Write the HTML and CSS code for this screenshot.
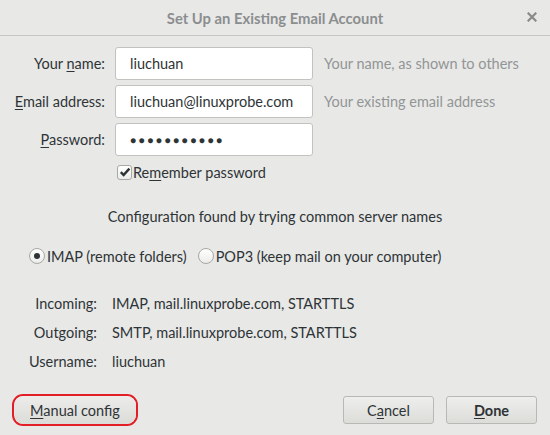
FILE: index.html
```html
<!DOCTYPE html>
<html>
<head>
<meta charset="utf-8">
<link rel="stylesheet" href="styles.css">
</head>
<body>
<div class="dialog">
  <div class="titlebar">
    <div class="title">Set Up an Existing Email Account</div>
    <div class="close">
      <svg width="10" height="10" viewBox="0 0 10 10"><path d="M1.5 1.5 L8.5 8.5 M8.5 1.5 L1.5 8.5" stroke="#8a8a8a" stroke-width="2.2" stroke-linecap="square"/></svg>
    </div>
  </div>
  <div class="content">
    <div class="form">
      <label class="lbl">Your <u>n</u>ame:</label>
      <div class="input">liuchuan</div>
      <div class="hint">Your name, as shown to others</div>

      <label class="lbl"><u>E</u>mail address:</label>
      <div class="input">liuchuan@linuxprobe.com</div>
      <div class="hint">Your existing email address</div>

      <label class="lbl"><u>P</u>assword:</label>
      <div class="input pw">●●●●●●●●●●●</div>
      <div class="hint"></div>
    </div>
    <div class="remember">
      <span class="checkbox">
        <svg width="12" height="12" viewBox="0 0 12 12"><path d="M1.8 6.2 L4.6 9 L10.4 2.6" fill="none" stroke="#2e3436" stroke-width="2.4"/></svg>
      </span>
      <span>Re<u>m</u>ember password</span>
    </div>
    <div class="found">Configuration found by trying common server names</div>
    <div class="protocols">
      <span class="radio checked"><span class="dot"></span></span>
      <span class="ptext">IMAP (remote folders)</span>
      <span class="radio"></span>
      <span class="ptext">POP3 (keep mail on your computer)</span>
    </div>
    <div class="servers">
      <div class="slbl">Incoming:</div><div class="sval">IMAP, mail.linuxprobe.com, STARTTLS</div>
      <div class="slbl">Outgoing:</div><div class="sval">SMTP, mail.linuxprobe.com, STARTTLS</div>
      <div class="slbl">Username:</div><div class="sval">liuchuan</div>
    </div>
    <div class="buttons">
      <div class="annot"><div class="btn manual"><span><u>M</u>anual config</span></div></div>
      <div class="spacer"></div>
      <div class="btn"><span>C<u>a</u>ncel</span></div>
      <div class="btn done"><span><u>D</u>one</span></div>
    </div>
  </div>
</div>
</body>
</html>
```

FILE: styles.css
```css
html, body {
  margin: 0;
  padding: 0;
}
body {
  width: 550px;
  height: 435px;
  background: #e8e8e7;
  font-family: Lato, "Noto Sans", sans-serif;
  font-size: 14.5px;
  color: #2e3436;
  overflow: hidden;
}
u {
  text-decoration: underline;
  text-underline-offset: 2px;
}
.dialog {
  width: 550px;
  height: 435px;
  display: flex;
  flex-direction: column;
}
.titlebar {
  height: 35px;
  border-bottom: 1px solid #c6c6c4;
  display: flex;
  align-items: center;
  justify-content: center;
  position: relative;
  flex-shrink: 0;
}
.title {
  color: #8b8e8f;
  font-weight: bold;
  font-size: 14.8px;
}
.close {
  position: absolute;
  right: 13px;
  top: 12px;
  width: 10px;
  height: 10px;
  display: flex;
}
.content {
  display: flex;
  flex-direction: column;
  padding-top: 11px;
}
.form {
  display: grid;
  grid-template-columns: 105px 198px auto;
  column-gap: 10px;
  row-gap: 5px;
  align-items: center;
}
.form .lbl {
  text-align: right;
  color: #2e3436;
}
.form .input {
  height: 31px;
  border: 1px solid #c2c3bf;
  border-radius: 3px;
  background: #ffffff;
  box-sizing: content-box;
  display: flex;
  align-items: center;
  padding-left: 14px;
  color: #2e3436;
}
.form .input.pw {
  font-size: 10px;
  letter-spacing: 2.6px;
  padding-left: 14px;
}
.form .hint {
  color: #929595;
  padding-left: 1px;
}
.remember {
  display: flex;
  align-items: center;
  margin-top: 5px;
  padding-left: 117px;
  height: 22px;
}
.checkbox {
  border: 1px solid #a7a9a5;
  border-radius: 3px;
  background: linear-gradient(#ffffff, #ececea);
  display: flex;
  align-items: center;
  justify-content: center;
  margin-right: 1px;
  box-sizing: border-box;
  width: 15px;
  height: 15px;
}
.found {
  margin-top: 24px;
  text-align: center;
  height: 20px;
  line-height: 20px;
}
.protocols {
  display: flex;
  align-items: center;
  margin-top: 19px;
  padding-left: 29px;
  height: 20px;
}
.radio {
  width: 16px;
  height: 16px;
  border: 1px solid #a7a9a5;
  border-radius: 50%;
  background: linear-gradient(#ffffff, #ececea);
  box-sizing: border-box;
  display: flex;
  align-items: center;
  justify-content: center;
  margin-right: 2px;
}
.radio .dot {
  width: 6px;
  height: 6px;
  border-radius: 50%;
  background: #2e3436;
}
.ptext {
  margin-right: 11px;
}
.servers {
  display: grid;
  grid-template-columns: 97px auto;
  column-gap: 15px;
  row-gap: 9px;
  margin-top: 28px;
  line-height: 20px;
}
.slbl {
  text-align: right;
}
.buttons {
  display: flex;
  align-items: center;
  margin-top: 22px;
  padding: 0 13px 0 12px;
  gap: 12px;
}
.spacer {
  flex: 1;
}
.btn {
  width: 91px;
  height: 28px;
  box-sizing: border-box;
  border: 1px solid #b8b9b5;
  border-radius: 3px;
  background: linear-gradient(#eeeeec, #dcdcd9);
  display: flex;
  align-items: center;
  justify-content: center;
  color: #2e3436;
}
.btn.done {
  font-weight: bold;
}
.annot {
  border: 2.5px solid #e41e26;
  border-radius: 11px;
  width: 126px;
  height: 32px;
  box-sizing: border-box;
  display: flex;
  align-items: center;
  justify-content: center;
  overflow: hidden;
}
.btn.manual {
  width: 121px;
  height: 28px;
  border: none;
  background: linear-gradient(#ececea, #dbdbd8);
}
```
